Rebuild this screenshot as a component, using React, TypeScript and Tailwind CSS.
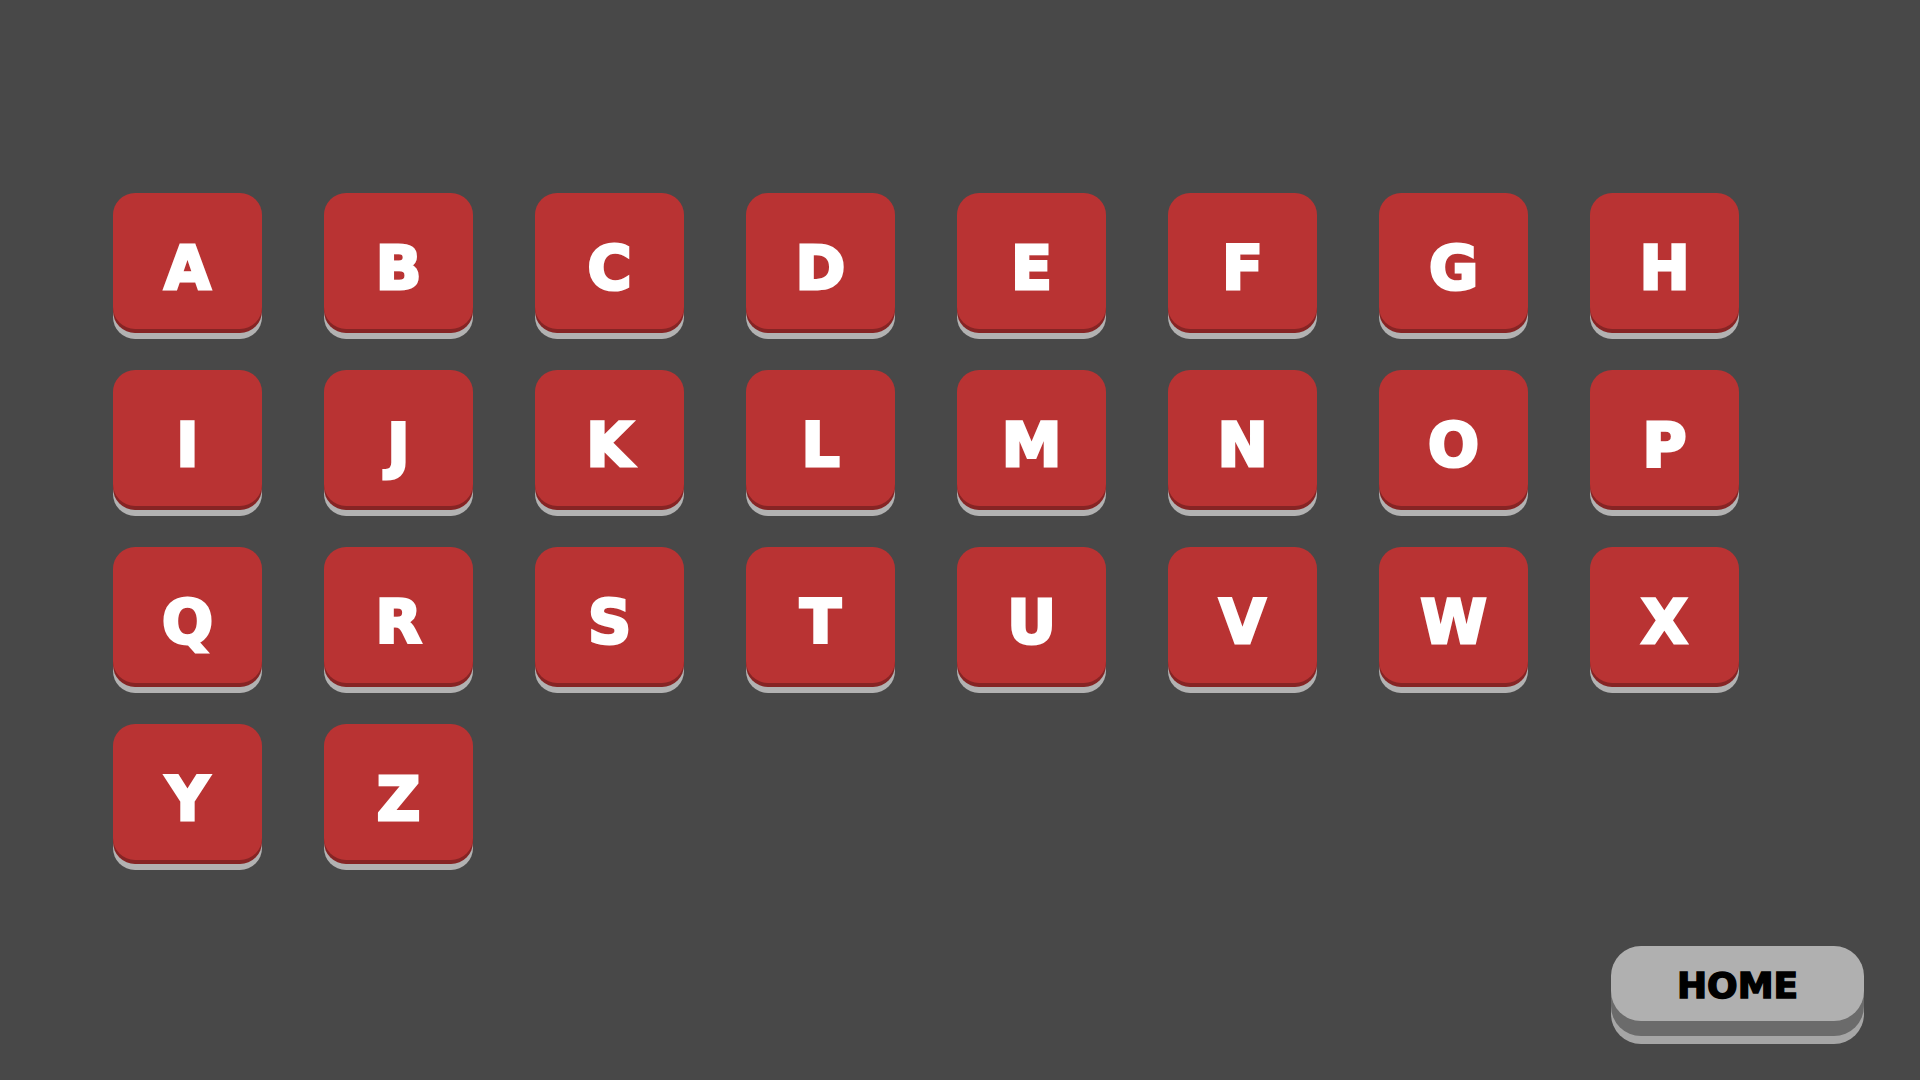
import React from "react";

const letters = "ABCDEFGHIJKLMNOPQRSTUVWXYZ".split("");

export default function App() {
  return (
    <div
      className="w-[1920px] h-[1080px] bg-[#484848] flex flex-col overflow-hidden"
      style={{ fontFamily: '"DejaVu Sans", "Liberation Sans", sans-serif' }}
    >
      <div className="pt-[193px] pl-[113px]">
        <div className="grid grid-cols-[repeat(8,149px)] gap-x-[62px] gap-y-[41px]">
          {letters.map((l) => (
            <div
              key={l}
              className="w-[149px] h-[136px] rounded-[22px] bg-[#b93333] shadow-[0_4px_0_#862424,0_10px_0_#b2b2b2] flex items-center justify-center pt-[13px]"
            >
              <span className="text-white font-bold text-[60px] leading-none [-webkit-text-stroke:3px_#ffffff] [paint-order:stroke_fill]">
                {l}
              </span>
            </div>
          ))}
        </div>
      </div>
      <div className="mt-auto flex justify-end pr-[56px] pb-[59px]">
        <div className="w-[253px] h-[75px] rounded-[30px] bg-[#b0b0b0] shadow-[0_15px_0_#6b6b6b,0_23px_0_#a6a6a6] flex items-center justify-center pt-[4px]">
          <span className="text-black font-bold text-[36px] leading-none [-webkit-text-stroke:1.5px_#000000] [paint-order:stroke_fill]">
            HOME
          </span>
        </div>
      </div>
    </div>
  );
}
